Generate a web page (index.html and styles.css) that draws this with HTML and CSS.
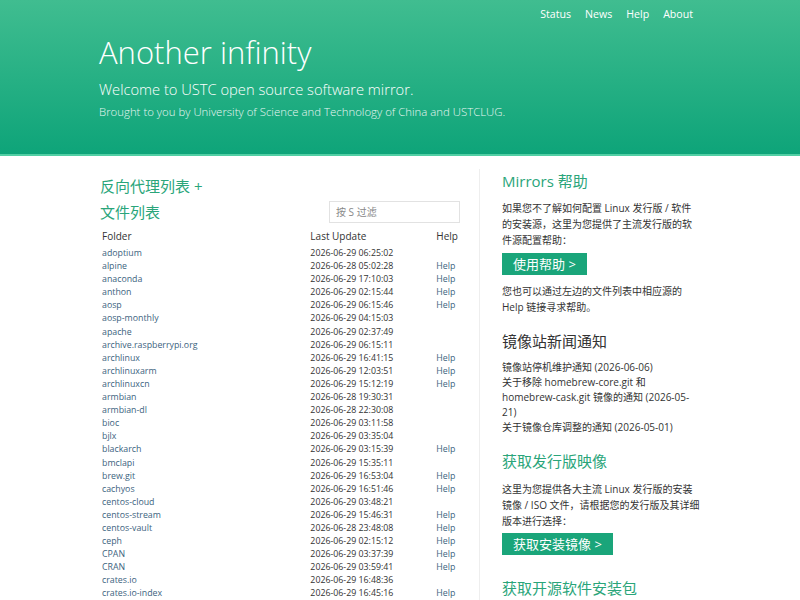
FILE: index.html
```html
<!DOCTYPE html>
<html lang="zh">
<head>
  <meta charset="UTF-8">
  <title>USTC Open Source Software Mirror</title>
  <link rel="stylesheet" href="styles.css">
</head>
<body>

<!-- 顶部横幅 -->
<header class="banner">
  <div class="wrap">
    <nav class="topnav">
      <a href="#">Status</a>
      <a href="#">News</a>
      <a href="#">Help</a>
      <a href="#">About</a>
    </nav>
    <h1>Another infinity</h1>
    <p class="lead">Welcome to USTC open source software mirror.</p>
    <p class="sub">Brought to you by University of Science and Technology of China and USTCLUG.</p>
  </div>
</header>

<div class="wrap main">

  <!-- 左侧：文件列表 -->
  <section class="files">
    <h2 class="green"><a href="#">反向代理列表 +</a></h2>
    <div class="list-head">
      <h2 class="green">文件列表</h2>
      <input type="text" class="filter" placeholder="按 S 过滤" />
    </div>
    <table class="filelist">
      <thead>
        <tr><th>Folder</th><th>Last Update</th><th>Help</th></tr>
      </thead>
      <tbody id="fileRows"></tbody>
    </table>
  </section>

  <!-- 右侧：帮助与新闻 -->
  <aside class="side">
    <h3 class="green">Mirrors 帮助</h3>
    <p>如果您不了解如何配置 Linux 发行版 / 软件的安装源，这里为您提供了主流发行版的软件源配置帮助：</p>
    <a class="btn" href="#">使用帮助 &gt;</a>
    <p class="after-btn">您也可以通过左边的文件列表中相应源的 Help 链接寻求帮助。</p>

    <h3 class="dark">镜像站新闻通知</h3>
    <ul class="news">
      <li><a href="#">镜像站停机维护通知 (2026-06-06)</a></li>
      <li><a href="#">关于移除 homebrew-core.git 和 <span class="nobr">homebrew-cask.git</span> 镜像的通知 (2026-05-<wbr>21)</a></li>
      <li><a href="#">关于镜像仓库调整的通知 (2026-05-01)</a></li>
    </ul>

    <h3 class="green">获取发行版映像</h3>
    <p>这里为您提供各大主流 Linux 发行版的安装镜像 / ISO 文件，请根据您的发行版及其详细版本进行选择：</p>
    <a class="btn btn-iso" href="#">获取安装镜像 &gt;</a>

    <h3 class="green last">获取开源软件安装包</h3>
  </aside>
</div>

<script>
  const mirrors = [
    ["adoptium", "2026-06-29 06:25:02", false],
    ["alpine", "2026-06-28 05:02:28", true],
    ["anaconda", "2026-06-29 17:10:03", true],
    ["anthon", "2026-06-29 02:15:44", true],
    ["aosp", "2026-06-29 06:15:46", true],
    ["aosp-monthly", "2026-06-29 04:15:03", false],
    ["apache", "2026-06-29 02:37:49", false],
    ["archive.raspberrypi.org", "2026-06-29 06:15:11", false],
    ["archlinux", "2026-06-29 16:41:15", true],
    ["archlinuxarm", "2026-06-29 12:03:51", true],
    ["archlinuxcn", "2026-06-29 15:12:19", true],
    ["armbian", "2026-06-28 19:30:31", false],
    ["armbian-dl", "2026-06-28 22:30:08", false],
    ["bioc", "2026-06-29 03:11:58", false],
    ["bjlx", "2026-06-29 03:35:04", false],
    ["blackarch", "2026-06-29 03:15:39", true],
    ["bmclapi", "2026-06-29 15:35:11", false],
    ["brew.git", "2026-06-29 16:53:04", true],
    ["cachyos", "2026-06-29 16:51:46", true],
    ["centos-cloud", "2026-06-29 03:48:21", false],
    ["centos-stream", "2026-06-29 15:46:31", true],
    ["centos-vault", "2026-06-28 23:48:08", true],
    ["ceph", "2026-06-29 02:15:12", true],
    ["CPAN", "2026-06-29 03:37:39", true],
    ["CRAN", "2026-06-29 03:59:41", true],
    ["crates.io", "2026-06-29 16:48:36", false],
    ["crates.io-index", "2026-06-29 16:45:16", true]
  ];

  const tbody = document.getElementById("fileRows");
  mirrors.forEach(m => {
    tbody.innerHTML += `
      <tr>
        <td><a href="#">${m[0]}</a></td>
        <td>${m[1]}</td>
        <td>${m[2] ? '<a href="#">Help</a>' : ''}</td>
      </tr>`;
  });
</script>

</body>
</html>
```

FILE: styles.css
```css
body {
  margin: 0;
  font-family: "Open Sans", "Noto Sans CJK SC", sans-serif;
  color: #333;
  background: #fff;
}
a { text-decoration: none; }
.wrap { width: 600px; margin: 0 auto; }

/* banner */
.banner {
  height: 154px;
  background: linear-gradient(to bottom, #40bd90, #0ea479);
  border-bottom: 2px solid #52cfa4;
  color: #fff;
}
.banner .wrap { padding-top: 6px; }
.topnav { display: flex; justify-content: flex-end; gap: 14px; padding-right: 7px; }
.topnav a { color: #fff; font-size: 10.6px; line-height: 16px; }
.banner h1 {
  margin: 10px 0 0 -1px;
  font-size: 31px; font-weight: 300; line-height: 40px;
}
.banner .lead { margin: 7px 0 0 -1px; font-size: 14.7px; font-weight: 300; line-height: 20px; }
.banner .sub { margin: 5px 0 0 -1px; font-size: 11.4px; font-weight: 300; line-height: 16px; opacity: 0.9; }

/* main */
.main { display: flex; padding-top: 13px; }
.files { width: 360px; padding-right: 19px; }
.side {
  flex: 1;
  border-left: 1px solid #eee;
  padding-left: 22px;
}
.green, .green a { color: #2aa57a; font-weight: 400; }
.dark { color: #333; font-weight: 400; }
h2 { margin: 0; font-size: 15px; line-height: 26px; }
h3 { margin: 0; font-size: 15px; line-height: 24px; }
.files > h2:first-child { margin-top: 4px; }
.list-head { display: flex; justify-content: space-between; align-items: center; }
.filter {
  width: 131px; height: 22px; box-sizing: border-box;
  border: 1px solid #e2e2e2; padding: 2px 6px;
  font-family: inherit; font-size: 10px; color: #555;
}
.filter::placeholder { color: #888; }

.filelist { width: 100%; border-collapse: collapse; margin-top: 2px; }
.filelist th { text-align: left; font-weight: 400; font-size: 10px; line-height: 18px; padding: 0 2px 2px; }
.filelist td { font-size: 8.8px; line-height: 13.1px; padding: 0 2px; color: #333; }
.filelist td a { color: #3c6380; }
.filelist th:nth-child(2), .filelist td:nth-child(2) { width: 122px; }
.filelist th:nth-child(3), .filelist td:nth-child(3) { width: 20px; }

.side p { margin: 7px 0 0; font-size: 10px; line-height: 16px; width: 198px; }
.side .btn {
  display: inline-block; margin-top: 5px;
  background: #1aa57a; color: #fff;
  font-size: 13px; line-height: 22px; padding: 0 11px;
}
.side .btn-iso { margin-top: 4px; }
.side p.after-btn { margin-top: 8px; }
.side h3 { margin-top: 14px; }
.side h3:first-child { margin-top: 0; }
.side h3.green.last { margin-top: 21px; }
.side h3 + p { margin-top: 8px; }
.side h3:first-child + p { margin-top: 7px; }
.news { list-style: none; margin: 7px 0 0; padding: 0; width: 198px; }
.news li { font-size: 10px; line-height: 15px; }
.news a { color: #333; }
.nobr { white-space: nowrap; }
```
